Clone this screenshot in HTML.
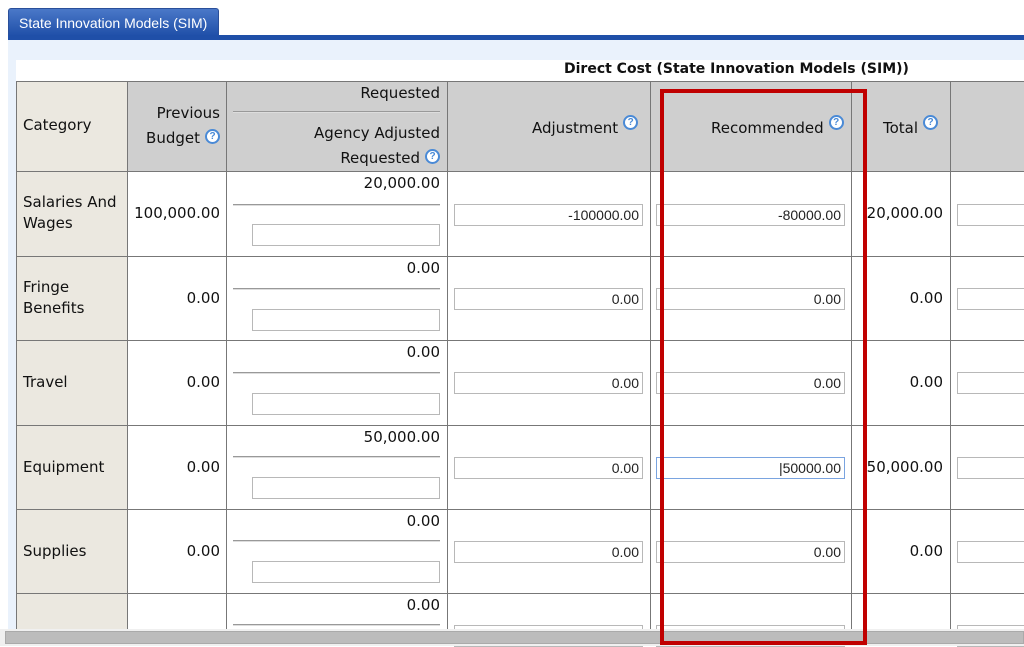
<!DOCTYPE html>
<html><head><meta charset="utf-8"><style>
*{margin:0;padding:0;box-sizing:border-box}
body{width:1024px;height:646px;overflow:hidden;background:#fff;font-family:"DejaVu Sans","Liberation Sans",sans-serif;font-size:15px;color:#111;position:relative}
.a{position:absolute}
.tab{left:8px;top:8px;width:211px;height:28px;background:linear-gradient(#4a78c8,#1f4fa8);border:1px solid #2a4f9a;border-bottom:none;border-radius:3px 3px 0 0;color:#fff;font-family:"Liberation Sans",sans-serif;font-size:14px;padding:6px 0 0 10px}
.bar{left:8px;top:35px;width:1016px;height:5px;background:#1f4fa8}
.panel{left:8px;top:40px;width:1016px;height:606px;background:#eaf2fc}
.white{left:16px;top:60px;width:1008px;height:570px;background:#fff}
.hl{height:1px;background:#777}
.vl{width:1px;background:#777}
.hd{background:#cfcfcf}
.cat{background:#ebe8e0}
.inp{height:22px;border:1px solid #b8b8b8;background:#fff;font-family:"Liberation Sans",sans-serif;font-size:14px;text-align:right;padding:2px 3px 0 0;color:#222}
.r{text-align:right}
.q{display:inline-block;width:15px;height:15px;border-radius:50%;border:2px solid #4a8ad6;color:#4a8ad6;font-size:10px;line-height:11px;text-align:center;font-weight:bold;vertical-align:top;margin-left:5px;background:#fff;font-family:"Liberation Sans",sans-serif}
.sep{height:2px;border-top:1px solid #999;border-bottom:1px solid #ddd}
</style></head><body>
<div class="a panel"></div>
<div class="a white"></div>
<div class="a tab">State Innovation Models (SIM)</div>
<div class="a bar"></div>
<div class="a" style="left:564px;top:61px;font-weight:bold;font-size:14px">Direct Cost (State Innovation Models (SIM))</div>

<div class="a cat" style="left:16px;top:81px;width:111px;height:560px"></div>
<div class="a hd" style="left:127px;top:81px;width:897px;height:90px"></div>

<div class="a vl" style="left:16px;top:81px;height:560px"></div>
<div class="a vl" style="left:127px;top:81px;height:560px"></div>
<div class="a vl" style="left:226px;top:81px;height:560px"></div>
<div class="a vl" style="left:447px;top:81px;height:560px"></div>
<div class="a vl" style="left:650px;top:81px;height:560px"></div>
<div class="a vl" style="left:851px;top:81px;height:560px"></div>
<div class="a vl" style="left:950px;top:81px;height:560px"></div>
<div class="a hl" style="left:16px;top:81px;width:1008px"></div>
<div class="a hl" style="left:16px;top:171px;width:1008px"></div>
<div class="a hl" style="left:16px;top:256px;width:1008px"></div>
<div class="a hl" style="left:16px;top:340px;width:1008px"></div>
<div class="a hl" style="left:16px;top:425px;width:1008px"></div>
<div class="a hl" style="left:16px;top:509px;width:1008px"></div>
<div class="a hl" style="left:16px;top:593px;width:1008px"></div>

<div class="a" style="left:23px;top:116px">Category</div>
<div class="a r" style="left:127px;top:101px;width:93px;line-height:25px">Previous<br>Budget<span class="q" style="margin-top:3px">?</span></div>
<div class="a r" style="left:226px;top:84px;width:214px">Requested</div>
<div class="a sep" style="left:233px;top:111px;width:207px"></div>
<div class="a r" style="left:226px;top:121px;width:214px;line-height:25px">Agency Adjusted<br>Requested<span class="q" style="margin-top:3px">?</span></div>
<div class="a" style="left:532px;top:119px">Adjustment<span class="q" style="margin-top:-4px">?</span></div>
<div class="a" style="left:711px;top:119px">Recommended<span class="q" style="margin-top:-4px">?</span></div>
<div class="a" style="left:883px;top:119px">Total<span class="q" style="margin-top:-4px">?</span></div>

<div class="a" style="left:23px;top:192px;line-height:21px">Salaries And<br>Wages</div>
<div class="a r" style="left:127px;top:204px;width:93px;font-size:15px">100,000.00</div>
<div class="a r" style="left:226px;top:174px;width:214px;font-size:15px">20,000.00</div>
<div class="a sep" style="left:233px;top:204px;width:207px"></div>
<div class="a inp" style="left:252px;top:224px;width:188px"></div>
<div class="a inp" style="left:454px;top:204px;width:189px">-100000.00</div>
<div class="a inp" style="left:656px;top:204px;width:189px">-80000.00</div>
<div class="a r" style="left:851px;top:204px;width:92px;font-size:15px">20,000.00</div>
<div class="a inp" style="left:957px;top:204px;width:80px"></div>

<div class="a" style="left:23px;top:277px;line-height:21px">Fringe<br>Benefits</div>
<div class="a r" style="left:127px;top:289px;width:93px">0.00</div>
<div class="a r" style="left:226px;top:259px;width:214px">0.00</div>
<div class="a sep" style="left:233px;top:288px;width:207px"></div>
<div class="a inp" style="left:252px;top:309px;width:188px"></div>
<div class="a inp" style="left:454px;top:288px;width:189px">0.00</div>
<div class="a inp" style="left:656px;top:288px;width:189px">0.00</div>
<div class="a r" style="left:851px;top:289px;width:92px">0.00</div>
<div class="a inp" style="left:957px;top:288px;width:80px"></div>

<div class="a" style="left:23px;top:373px">Travel</div>
<div class="a r" style="left:127px;top:373px;width:93px">0.00</div>
<div class="a r" style="left:226px;top:343px;width:214px">0.00</div>
<div class="a sep" style="left:233px;top:372px;width:207px"></div>
<div class="a inp" style="left:252px;top:393px;width:188px"></div>
<div class="a inp" style="left:454px;top:372px;width:189px">0.00</div>
<div class="a inp" style="left:656px;top:372px;width:189px">0.00</div>
<div class="a r" style="left:851px;top:373px;width:92px">0.00</div>
<div class="a inp" style="left:957px;top:372px;width:80px"></div>

<div class="a" style="left:23px;top:458px">Equipment</div>
<div class="a r" style="left:127px;top:458px;width:93px">0.00</div>
<div class="a r" style="left:226px;top:428px;width:214px">50,000.00</div>
<div class="a sep" style="left:233px;top:456px;width:207px"></div>
<div class="a inp" style="left:252px;top:477px;width:188px"></div>
<div class="a inp" style="left:454px;top:457px;width:189px">0.00</div>
<div class="a inp" style="left:656px;top:457px;width:189px;border-color:#7aa4e0">|50000.00</div>
<div class="a r" style="left:851px;top:458px;width:92px">50,000.00</div>
<div class="a inp" style="left:957px;top:457px;width:80px"></div>

<div class="a" style="left:23px;top:542px">Supplies</div>
<div class="a r" style="left:127px;top:542px;width:93px">0.00</div>
<div class="a r" style="left:226px;top:512px;width:214px">0.00</div>
<div class="a sep" style="left:233px;top:540px;width:207px"></div>
<div class="a inp" style="left:252px;top:561px;width:188px"></div>
<div class="a inp" style="left:454px;top:541px;width:189px">0.00</div>
<div class="a inp" style="left:656px;top:541px;width:189px">0.00</div>
<div class="a r" style="left:851px;top:542px;width:92px">0.00</div>
<div class="a inp" style="left:957px;top:541px;width:80px"></div>

<div class="a r" style="left:226px;top:596px;width:214px">0.00</div>
<div class="a sep" style="left:233px;top:624px;width:207px"></div>
<div class="a inp" style="left:454px;top:625px;width:189px"></div>
<div class="a inp" style="left:656px;top:625px;width:189px"></div>
<div class="a inp" style="left:957px;top:625px;width:80px"></div>

<div class="a" style="left:0;top:629px;width:1024px;height:17px;background:#f0f0f0"></div>
<div class="a" style="left:5px;top:631px;width:1019px;height:13px;background:#bcbcbc;border:1px solid #aaa"></div>

<div class="a" style="left:660px;top:89px;width:207px;height:556px;border:4px solid #c00000"></div>
</body></html>
